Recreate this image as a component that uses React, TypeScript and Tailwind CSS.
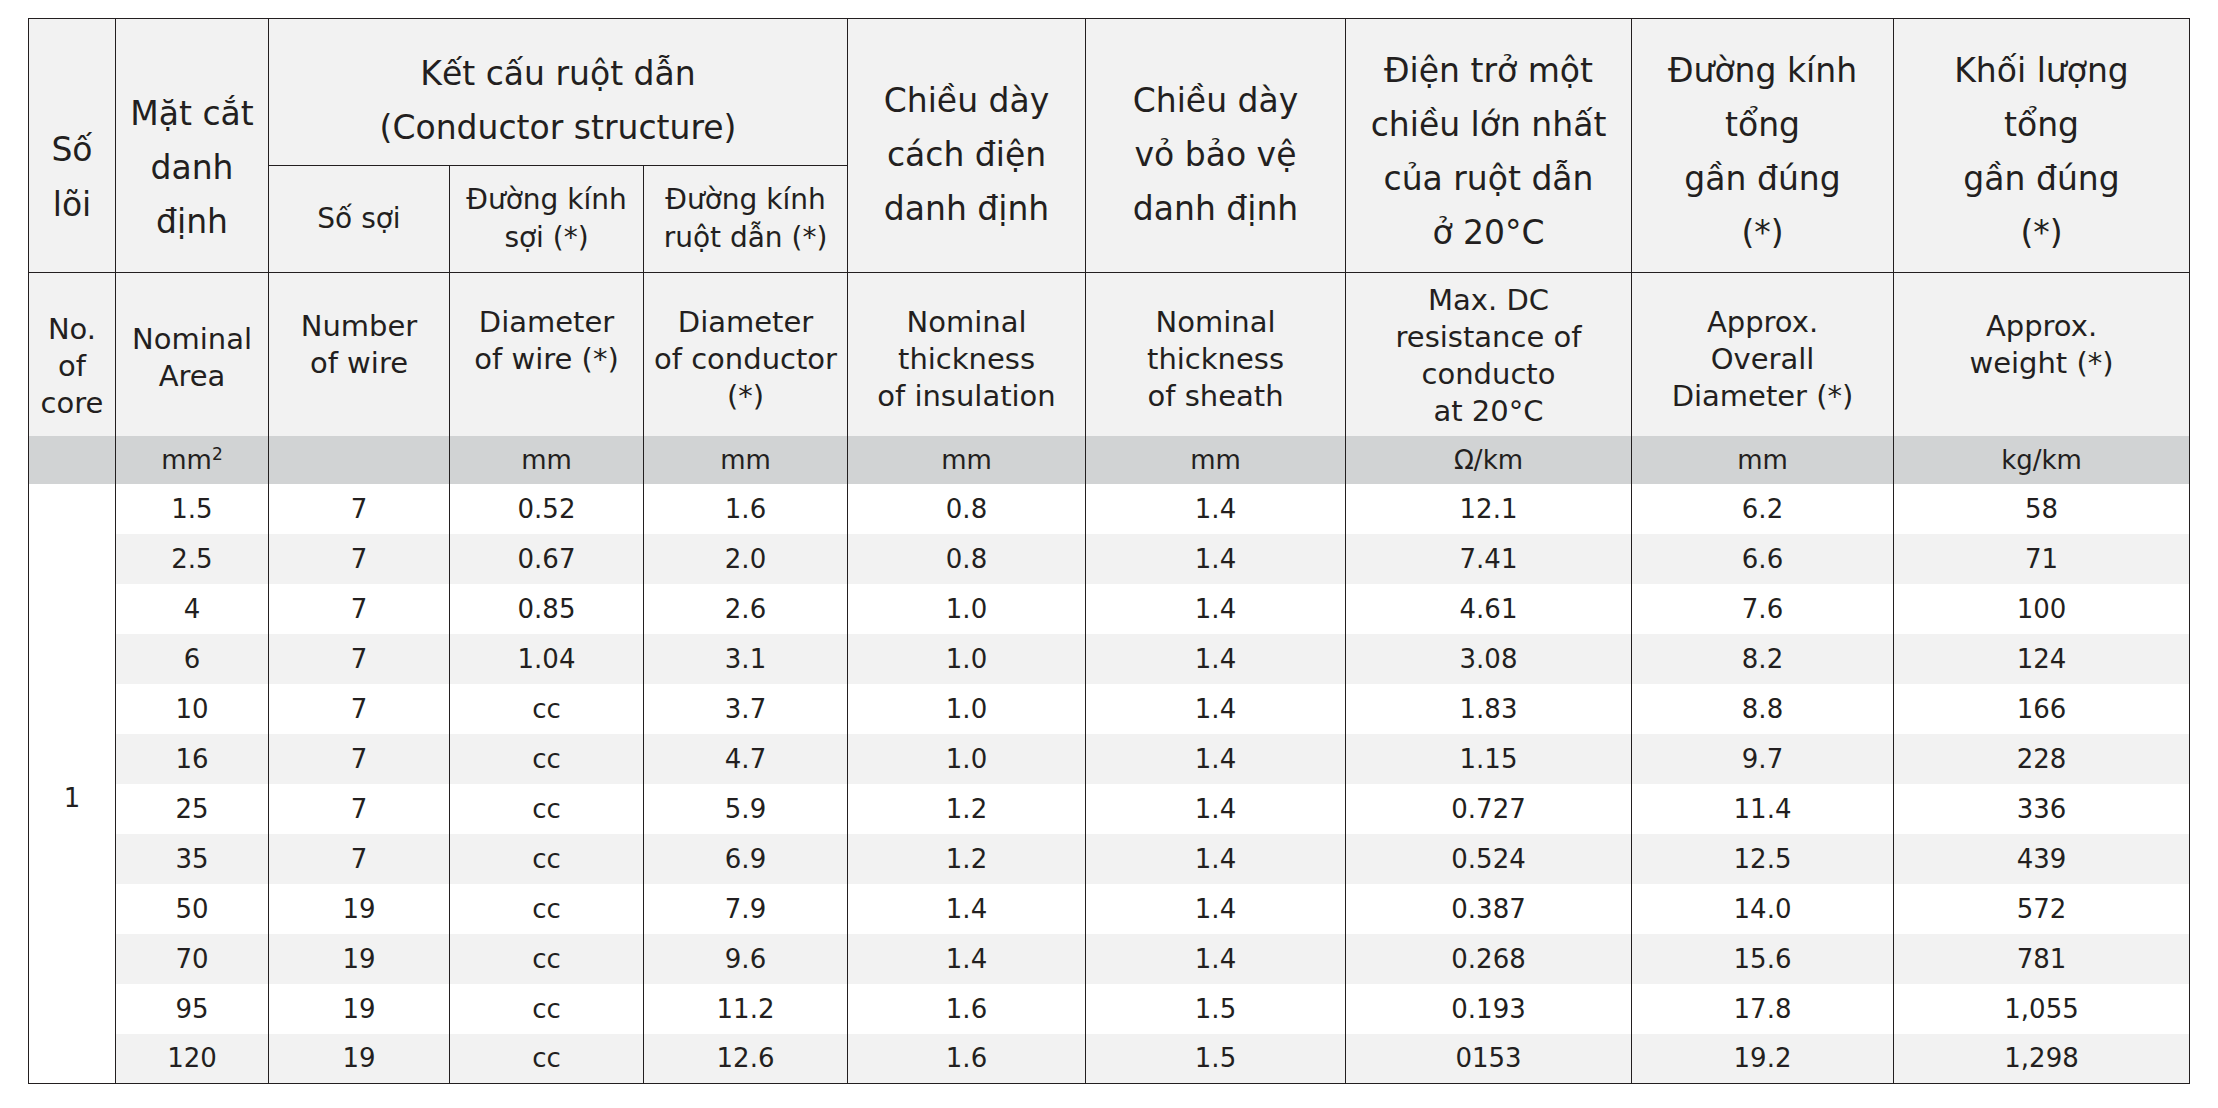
const rows = [
  ["1.5", "7", "0.52", "1.6", "0.8", "1.4", "12.1", "6.2", "58"],
  ["2.5", "7", "0.67", "2.0", "0.8", "1.4", "7.41", "6.6", "71"],
  ["4", "7", "0.85", "2.6", "1.0", "1.4", "4.61", "7.6", "100"],
  ["6", "7", "1.04", "3.1", "1.0", "1.4", "3.08", "8.2", "124"],
  ["10", "7", "cc", "3.7", "1.0", "1.4", "1.83", "8.8", "166"],
  ["16", "7", "cc", "4.7", "1.0", "1.4", "1.15", "9.7", "228"],
  ["25", "7", "cc", "5.9", "1.2", "1.4", "0.727", "11.4", "336"],
  ["35", "7", "cc", "6.9", "1.2", "1.4", "0.524", "12.5", "439"],
  ["50", "19", "cc", "7.9", "1.4", "1.4", "0.387", "14.0", "572"],
  ["70", "19", "cc", "9.6", "1.4", "1.4", "0.268", "15.6", "781"],
  ["95", "19", "cc", "11.2", "1.6", "1.5", "0.193", "17.8", "1,055"],
  ["120", "19", "cc", "12.6", "1.6", "1.5", "0153", "19.2", "1,298"],
];

const widths = ["w-[87px]", "w-[153px]", "w-[181px]", "w-[194px]", "w-[204px]", "w-[238px]", "w-[260px]", "w-[286px]", "w-[262px]", "w-[296px]"];

function Lines({ lines }: { lines: string[] }) {
  return (
    <>
      {lines.map((l, i) => (
        <div key={i} className="whitespace-nowrap">
          {l}
        </div>
      ))}
    </>
  );
}

const cell = "border-[1.5px] border-[#231f20] text-center";
// Vietnamese header: big type, loose leading
const vn = `${cell} align-top text-[33px] leading-[54px]`;
// English header row: no bottom rule
const en = "border-x-[1.5px] border-t-[1.5px] border-[#231f20] text-center align-top text-[29px] leading-[37px]";

export default function App() {
  return (
    <div className="bg-white min-h-[1108px] pl-[28px] pt-[18px] text-[#231f20] font-['DejaVu_Sans',sans-serif]">
      <table className="table-fixed border-collapse w-[2161px]">
        <colgroup>
          {widths.map((w, i) => (
            <col key={i} className={w} />
          ))}
        </colgroup>
        <tbody className="bg-[#f2f2f2]">
          <tr className="h-[147px]">
            <td rowSpan={2} className={`${vn} pt-[103px] leading-[55px]`}>
              <Lines lines={["Số", "lõi"]} />
            </td>
            <td rowSpan={2} className={`${vn} pt-[68px]`}>
              <Lines lines={["Mặt cắt", "danh", "định"]} />
            </td>
            <td colSpan={3} className={`${vn} pt-[28px]`}>
              <Lines lines={["Kết cấu ruột dẫn", "(Conductor structure)"]} />
            </td>
            <td rowSpan={2} className={`${vn} pt-[55px]`}>
              <Lines lines={["Chiều dày", "cách điện", "danh định"]} />
            </td>
            <td rowSpan={2} className={`${vn} pt-[55px]`}>
              <Lines lines={["Chiều dày", "vỏ bảo vệ", "danh định"]} />
            </td>
            <td rowSpan={2} className={`${vn} pt-[25px]`}>
              <Lines lines={["Điện trở một", "chiều lớn nhất", "của ruột dẫn", "ở 20°C"]} />
            </td>
            <td rowSpan={2} className={`${vn} pt-[25px]`}>
              <Lines lines={["Đường kính", "tổng", "gần đúng", "(*)"]} />
            </td>
            <td rowSpan={2} className={`${vn} pt-[25px]`}>
              <Lines lines={["Khối lượng", "tổng", "gần đúng", "(*)"]} />
            </td>
          </tr>
          <tr className="h-[107px]">
            <td className={`${cell} align-middle text-[28px] leading-[38px]`}>Số sợi</td>
            <td className={`${cell} align-middle text-[28px] leading-[38px]`}>
              <Lines lines={["Đường kính", "sợi (*)"]} />
            </td>
            <td className={`${cell} align-middle text-[28px] leading-[38px]`}>
              <Lines lines={["Đường kính", "ruột dẫn (*)"]} />
            </td>
          </tr>
          <tr className="h-[163px]">
            <td className={`${en} pt-[38px]`}>
              <Lines lines={["No.", "of", "core"]} />
            </td>
            <td className={`${en} pt-[48px]`}>
              <Lines lines={["Nominal", "Area"]} />
            </td>
            <td className={`${en} pt-[35px]`}>
              <Lines lines={["Number", "of wire"]} />
            </td>
            <td className={`${en} pt-[31px]`}>
              <Lines lines={["Diameter", "of wire (*)"]} />
            </td>
            <td className={`${en} pt-[31px]`}>
              <Lines lines={["Diameter", "of conductor", "(*)"]} />
            </td>
            <td className={`${en} pt-[31px]`}>
              <Lines lines={["Nominal", "thickness", "of insulation"]} />
            </td>
            <td className={`${en} pt-[31px]`}>
              <Lines lines={["Nominal", "thickness", "of sheath"]} />
            </td>
            <td className={`${en} pt-[9px]`}>
              <Lines lines={["Max. DC", "resistance of", "conducto", "at 20°C"]} />
            </td>
            <td className={`${en} pt-[31px]`}>
              <Lines lines={["Approx.", "Overall", "Diameter (*)"]} />
            </td>
            <td className={`${en} pt-[35px]`}>
              <Lines lines={["Approx.", "weight (*)"]} />
            </td>
          </tr>
          <tr className="h-[48px] bg-[#d1d3d4] text-[26px] leading-none">
            <td className="border-x-[1.5px] border-[#231f20]"></td>
            <td className="border-x-[1.5px] border-[#231f20] text-center">
              mm<sup className="text-[17px]">2</sup>
            </td>
            <td className="border-x-[1.5px] border-[#231f20]"></td>
            <td className="border-x-[1.5px] border-[#231f20] text-center">mm</td>
            <td className="border-x-[1.5px] border-[#231f20] text-center">mm</td>
            <td className="border-x-[1.5px] border-[#231f20] text-center">mm</td>
            <td className="border-x-[1.5px] border-[#231f20] text-center">mm</td>
            <td className="border-x-[1.5px] border-[#231f20] text-center">Ω/km</td>
            <td className="border-x-[1.5px] border-[#231f20] text-center">mm</td>
            <td className="border-x-[1.5px] border-[#231f20] text-center">kg/km</td>
          </tr>
          {rows.map((r, i) => (
            <tr key={i} className={`h-[50px] text-[26px] leading-none ${i % 2 === 0 ? "bg-white" : "bg-[#f2f2f2]"}`}>
              {i === 0 && (
                <td rowSpan={rows.length} className="bg-white border-x-[1.5px] border-b-[1.5px] border-[#231f20] text-center align-middle pt-[30px]">
                  1
                </td>
              )}
              {r.map((v, j) => (
                <td
                  key={j}
                  className={`border-x-[1.5px] border-[#231f20] text-center align-middle ${i === rows.length - 1 ? "border-b-[1.5px]" : ""}`}
                >
                  {v}
                </td>
              ))}
            </tr>
          ))}
        </tbody>
      </table>
    </div>
  );
}
